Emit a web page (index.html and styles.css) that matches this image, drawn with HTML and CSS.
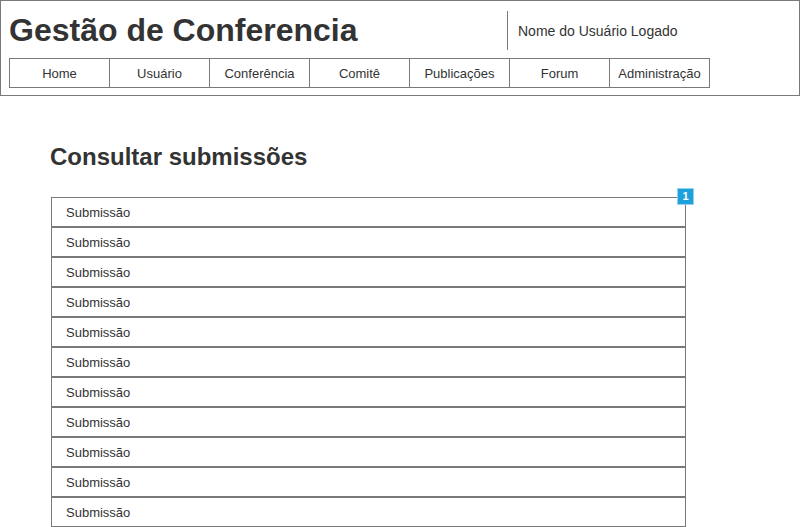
FILE: index.html
```html
<!DOCTYPE html>
<html lang="pt">
<head>
<meta charset="utf-8">
<title>Gestão de Conferencia</title>
<link rel="stylesheet" href="styles.css">
</head>
<body>
<header class="header">
  <div class="top">
    <h1 class="title">Gestão de Conferencia</h1>
    <div class="user">Nome do Usuário Logado</div>
  </div>
  <nav class="nav">
    <a class="nav-item">Home</a>
    <a class="nav-item">Usuário</a>
    <a class="nav-item">Conferência</a>
    <a class="nav-item">Comitê</a>
    <a class="nav-item">Publicações</a>
    <a class="nav-item">Forum</a>
    <a class="nav-item">Administração</a>
  </nav>
</header>
<main class="main">
  <h2 class="heading">Consultar submissões</h2>
  <div class="list">
    <span class="badge">1</span>
    <div class="row">Submissão</div>
    <div class="row">Submissão</div>
    <div class="row">Submissão</div>
    <div class="row">Submissão</div>
    <div class="row">Submissão</div>
    <div class="row">Submissão</div>
    <div class="row">Submissão</div>
    <div class="row">Submissão</div>
    <div class="row">Submissão</div>
    <div class="row">Submissão</div>
    <div class="row">Submissão</div>
  </div>
</main>
</body>
</html>
```

FILE: styles.css
```css
* { box-sizing: border-box; }
html, body { margin: 0; padding: 0; background: #fff; }
body {
  font-family: "Liberation Sans", Arial, sans-serif;
  color: #333;
  width: 800px;
  height: 527px;
  overflow: hidden;
}
.header {
  border: 1px solid #797979;
  height: 96px;
  padding: 0 8px;
}
.top {
  display: flex;
  align-items: flex-start;
  height: 57px;
}
.title {
  margin: 0;
  padding-top: 9px;
  width: 498px;
  font-size: 32px;
  line-height: 40px;
  font-weight: bold;
  color: #333;
}
.user {
  margin-top: 10px;
  height: 39px;
  padding-top: 2px;
  line-height: 37px;
  border-left: 1px solid #797979;
  padding-left: 10px;
  font-size: 14px;
  color: #333;
}
.nav {
  display: flex;
  width: 701px;
  height: 30px;
  border: 1px solid #797979;
  border-right: none;
}
.nav-item {
  width: 100px;
  border-right: 1px solid #797979;
  text-align: center;
  font-size: 13px;
  padding-top: 2px;
  line-height: 26px;
  color: #333;
}
.main {
  padding: 47px 0 0 51px;
}
.heading {
  margin: 0 0 26px -1px;
  font-size: 24px;
  line-height: 28px;
  font-weight: bold;
  color: #333;
}
.list {
  position: relative;
  width: 635px;
}
.row {
  height: 30px;
  border: 1px solid #797979;
  padding: 2px 0 0 14px;
  font-size: 13px;
  line-height: 26px;
  color: #333;
}
.badge {
  position: absolute;
  top: -9px;
  right: -8px;
  width: 17px;
  height: 17px;
  background: #1fa0db;
  border: 1px solid #90d2ef;
  color: #fff;
  font-size: 11px;
  font-weight: bold;
  line-height: 15px;
  text-align: center;
}
```
